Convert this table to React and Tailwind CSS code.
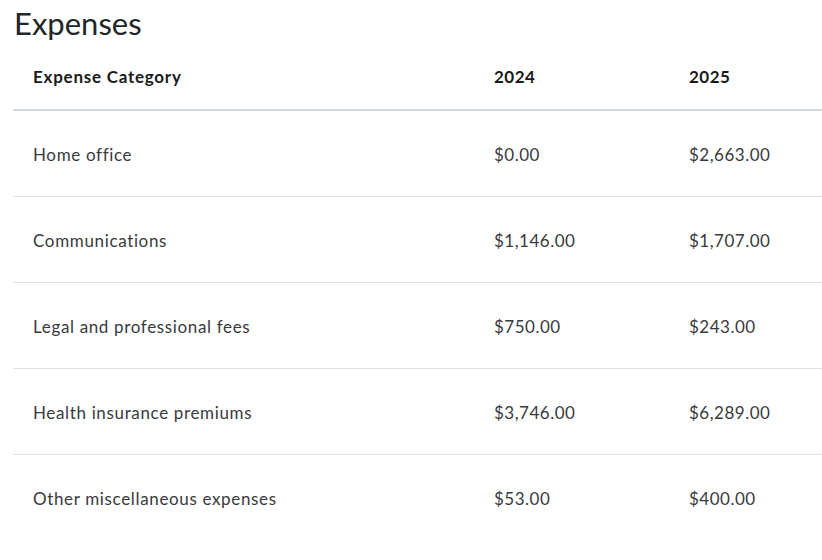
const rows = [
  { name: "Home office", y2024: "$0.00", y2025: "$2,663.00" },
  { name: "Communications", y2024: "$1,146.00", y2025: "$1,707.00" },
  { name: "Legal and professional fees", y2024: "$750.00", y2025: "$243.00" },
  { name: "Health insurance premiums", y2024: "$3,746.00", y2025: "$6,289.00" },
  { name: "Other miscellaneous expenses", y2024: "$53.00", y2025: "$400.00" },
];

export default function App() {
  return (
    <div className="min-h-[560px] bg-white font-['Lato','Liberation_Sans',sans-serif] text-[#393a3d]">
      <h1 className="h-[45px] pl-[14px] pt-[5px] text-[31px] leading-[36px] font-normal text-[#21262a]">
        Expenses
      </h1>
      <div className="ml-[13px]">
        <div className="grid h-[66px] grid-cols-[461px_195px_1fr] items-center border-b-2 border-[#d4dce1] text-[17px] tracking-[0.5px] font-bold text-[#1a1a1a]">
          <div className="pl-[20px] tracking-[0.75px]">Expense Category</div>
          <div className="pl-[20px]">2024</div>
          <div className="pl-[20px]">2025</div>
        </div>
        {rows.map((r, i) => (
          <div
            key={r.name}
            className={`grid h-[86px] grid-cols-[461px_195px_1fr] items-center pt-[2px] text-[17px] tracking-[0.5px] ${
              i < rows.length - 1 ? "border-b border-[#dde3e7]" : ""
            }`}
          >
            <div className="pl-[20px] tracking-[0.65px]">{r.name}</div>
            <div className="pl-[20px]">{r.y2024}</div>
            <div className="pl-[20px]">{r.y2025}</div>
          </div>
        ))}
      </div>
    </div>
  );
}
